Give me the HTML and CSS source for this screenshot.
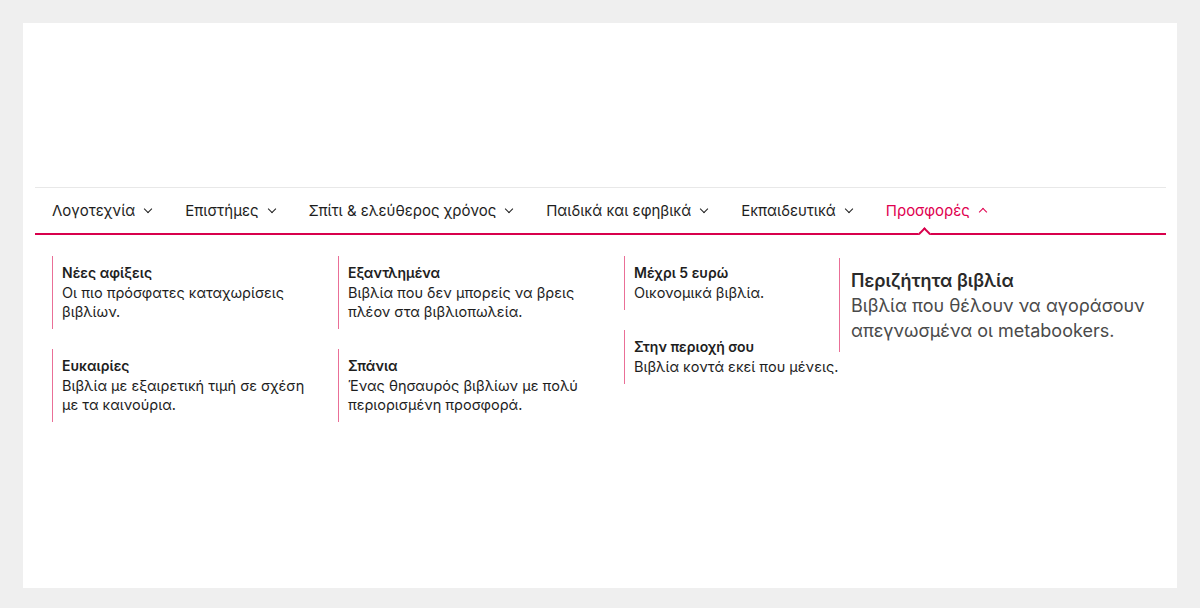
FILE: index.html
```html
<!DOCTYPE html>
<html lang="el">
<head>
	<meta charset="UTF-8">
	<title>Κατηγορίες - Προσφορές</title>
	<link rel="stylesheet" href="styles.css">
</head>
<body>
	<div id="wrapper">
		<!-- main category bar -->
		<nav class="catNav">
			<ul class="catList">
				<li class="catItem">Λογοτεχνία <span class="chev"></span></li>
				<li class="catItem">Επιστήμες <span class="chev"></span></li>
				<li class="catItem">Σπίτι &amp; ελεύθερος χρόνος <span class="chev"></span></li>
				<li class="catItem">Παιδικά και εφηβικά <span class="chev"></span></li>
				<li class="catItem">Εκπαιδευτικά <span class="chev"></span></li>
				<li class="catItem active">Προσφορές <span class="chev up"></span></li>
			</ul>
		</nav>

		<!-- dropdown for the open category -->
		<div class="dropMenu">
			<div class="dropCol">
				<a class="dropLink" href="#">
					<strong>Νέες αφίξεις</strong>
					<span>Οι πιο πρόσφατες καταχωρίσεις βιβλίων.</span>
				</a>
				<a class="dropLink" href="#">
					<strong>Ευκαιρίες</strong>
					<span>Βιβλία με εξαιρετική τιμή σε σχέση με τα καινούρια.</span>
				</a>
			</div>
			<div class="dropCol">
				<a class="dropLink" href="#">
					<strong>Εξαντλημένα</strong>
					<span>Βιβλία που δεν μπορείς να βρεις πλέον στα βιβλιοπωλεία.</span>
				</a>
				<a class="dropLink" href="#">
					<strong>Σπάνια</strong>
					<span>Ένας θησαυρός βιβλίων με πολύ περιορισμένη προσφορά.</span>
				</a>
			</div>
			<div class="dropCol">
				<a class="dropLink" href="#">
					<strong>Μέχρι 5 ευρώ</strong>
					<span>Οικονομικά βιβλία.</span>
				</a>
				<a class="dropLink" href="#">
					<strong>Στην περιοχή σου</strong>
					<span class="nowrap">Βιβλία κοντά εκεί που μένεις.</span>
				</a>
			</div>
			<div class="dropCol featured">
				<a class="dropLink" href="#">
					<strong>Περιζήτητα βιβλία</strong>
					<span>Βιβλία που θέλουν να αγοράσουν απεγνωσμένα οι metabookers.</span>
				</a>
			</div>
		</div>
	</div>
</body>
</html>
```
FILE: styles.css
```css
body {
	margin: 0;
	padding: 23px;
	background-color: #efefef;
	font-family: "Inter", "Noto Sans", sans-serif;
	color: #1e1e1e;
}
#wrapper {
	background-color: #fff;
	height: 565px;
	padding: 164px 11px 0 12px;
	box-sizing: border-box;
}
.catNav {
	border-top: 1px solid #e8e8e8;
	border-bottom: 2px solid #d8004c;
	position: relative;
}
.catList {
	list-style: none;
	margin: 0;
	padding: 0 0 0 17px;
	display: flex;
	gap: 32px;
}
.catItem {
	height: 45px;
	line-height: 47px;
	font-size: 15px;
	display: flex;
	align-items: center;
	gap: 8px;
	position: relative;
}
.catItem.active {
	color: #e0004f;
}
/* little chevron next to each category */
.chev {
	width: 5px;
	height: 5px;
	border-right: 1.5px solid currentColor;
	border-bottom: 1.5px solid currentColor;
	transform: rotate(45deg);
	margin: -4px 2px 0 2px;
}
.chev.up {
	transform: rotate(-135deg);
	margin-top: 3px;
}
/* notch under the open category */
.catItem.active::after {
	content: "";
	position: absolute;
	left: 34px;
	bottom: -5px;
	width: 7px;
	height: 7px;
	background: #fff;
	border-left: 2px solid #d8004c;
	border-top: 2px solid #d8004c;
	transform: rotate(45deg);
}
.dropMenu {
	display: flex;
	padding: 21px 0 0 17px;
}
.dropCol {
	width: 286px;
	display: flex;
	flex-direction: column;
	gap: 20px;
}
.dropLink {
	display: block;
	border-left: 1px solid #ea6f97;
	padding: 7px 10px 8px 9px;
	color: #1e1e1e;
	text-decoration: none;
	font-size: 14.5px;
	line-height: 19px;
}
.dropLink strong {
	display: block;
	font-weight: 600;
	font-size: 14px;
	line-height: 20px;
}
.dropLink span {
	display: block;
	padding-right: 20px;
}
.dropCol .nowrap {
	white-space: nowrap;
}
.dropCol:nth-child(3) {
	width: 215px;
}
/* featured column, drawn a bit larger */
.featured {
	flex: 1;
	padding-top: 2px;
	background: rgba(255, 255, 255, 0.75);
	position: relative;
}
.featured .dropLink {
	font-size: 18px;
	line-height: 25px;
	padding: 10px 0 9px 11px;
	color: #4a4a4a;
}
.featured .dropLink span {
	padding-right: 0;
}
.featured .dropLink strong {
	color: #2a2a2a;
	font-size: 18px;
	line-height: 25px;
}
```
